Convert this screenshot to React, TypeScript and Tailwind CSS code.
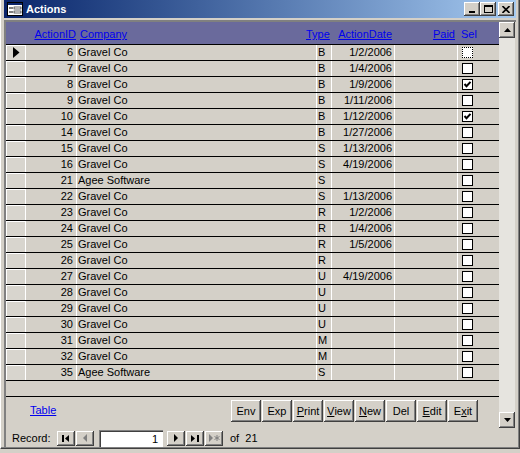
import React from 'react';

type Row = { id: number; company: string; type: string; date: string; sel: boolean };

const rows: Row[] = [
  { id: 6, company: 'Gravel Co', type: 'B', date: '1/2/2006', sel: false },
  { id: 7, company: 'Gravel Co', type: 'B', date: '1/4/2006', sel: false },
  { id: 8, company: 'Gravel Co', type: 'B', date: '1/9/2006', sel: true },
  { id: 9, company: 'Gravel Co', type: 'B', date: '1/11/2006', sel: false },
  { id: 10, company: 'Gravel Co', type: 'B', date: '1/12/2006', sel: true },
  { id: 14, company: 'Gravel Co', type: 'B', date: '1/27/2006', sel: false },
  { id: 15, company: 'Gravel Co', type: 'S', date: '1/13/2006', sel: false },
  { id: 16, company: 'Gravel Co', type: 'S', date: '4/19/2006', sel: false },
  { id: 21, company: 'Agee Software', type: 'S', date: '', sel: false },
  { id: 22, company: 'Gravel Co', type: 'S', date: '1/13/2006', sel: false },
  { id: 23, company: 'Gravel Co', type: 'R', date: '1/2/2006', sel: false },
  { id: 24, company: 'Gravel Co', type: 'R', date: '1/4/2006', sel: false },
  { id: 25, company: 'Gravel Co', type: 'R', date: '1/5/2006', sel: false },
  { id: 26, company: 'Gravel Co', type: 'R', date: '', sel: false },
  { id: 27, company: 'Gravel Co', type: 'U', date: '4/19/2006', sel: false },
  { id: 28, company: 'Gravel Co', type: 'U', date: '', sel: false },
  { id: 29, company: 'Gravel Co', type: 'U', date: '', sel: false },
  { id: 30, company: 'Gravel Co', type: 'U', date: '', sel: false },
  { id: 31, company: 'Gravel Co', type: 'M', date: '', sel: false },
  { id: 32, company: 'Gravel Co', type: 'M', date: '', sel: false },
  { id: 35, company: 'Agee Software', type: 'S', date: '', sel: false },
];

const raised =
  'bg-[#d4d0c8] shadow-[inset_-1px_-1px_#404040,inset_1px_1px_#ffffff,inset_-2px_-2px_#808080,inset_2px_2px_#d4d0c8]';

// footer command buttons, u = index of underlined access key
const commands: { label: string; u: number }[] = [
  { label: 'Env', u: -1 },
  { label: 'Exp', u: -1 },
  { label: 'Print', u: 0 },
  { label: 'View', u: 0 },
  { label: 'New', u: 0 },
  { label: 'Del', u: -1 },
  { label: 'Edit', u: 0 },
  { label: 'Exit', u: 1 },
];

const Check = ({ on, focus }: { on: boolean; focus?: boolean }) => (
  <div
    className={`w-[11px] h-[11px] bg-white border border-black flex items-center justify-center ${
      focus ? 'border-dotted' : ''
    }`}
  >
    {on && (
      <svg width="9" height="9" viewBox="0 0 9 9">
        <polyline points="1.5,4 3.5,6.2 7.5,1.8" fill="none" stroke="black" strokeWidth="2" />
      </svg>
    )}
  </div>
);

const NavBtn = ({ children }: { children: React.ReactNode }) => (
  <div className={`w-[18px] h-[15px] flex items-center justify-center ${raised}`}>{children}</div>
);

const TitleBtn = ({ children }: { children: React.ReactNode }) => (
  <div className={`w-[16px] h-[14px] flex items-center justify-center ${raised}`}>{children}</div>
);

export default function App() {
  return (
    <div className="w-[520px] h-[453px] bg-[#d4d0c8] font-['Liberation_Sans',Arial,sans-serif] text-[11px] text-black overflow-hidden">
      <div className="h-[449px] flex flex-col px-[3px] border-l border-r border-b border-l-[#ffffff] border-r-[#404040] border-b-[#404040] shadow-[inset_-1px_-1px_#808080]">
        {/* title bar */}
        <div className="h-[18px] flex items-center bg-gradient-to-r from-[#0a246a] to-[#a6caf0] pl-[3px] pr-[2px]">
          <svg width="16" height="14" viewBox="0 0 16 14" className="shrink-0">
            <rect x="0.5" y="0.5" width="15" height="13" fill="#ffffff" stroke="#000000" />
            <rect x="1" y="1" width="14" height="2" fill="#0a246a" />
            <rect x="2" y="5" width="4" height="2" fill="#808080" />
            <rect x="7" y="5" width="7" height="2" fill="#ffffff" stroke="#000" strokeWidth="0.6" />
            <rect x="2" y="9" width="4" height="2" fill="#808080" />
            <rect x="7" y="9" width="7" height="2" fill="#ffffff" stroke="#000" strokeWidth="0.6" />
          </svg>
          <span className="ml-[3px] text-white font-bold text-[11px] leading-none">Actions</span>
          <div className="flex-1" />
          <TitleBtn>
            <div className="w-[6px] h-[2px] bg-black mt-[6px] mr-[1px]" />
          </TitleBtn>
          <TitleBtn>
            <div className="w-[9px] h-[8px] border border-black border-t-2" />
          </TitleBtn>
          <div className="w-[2px]" />
          <TitleBtn>
            <svg width="8" height="7" viewBox="0 0 8 7">
              <path d="M0.5 0 L7.5 7 M7.5 0 L0.5 7" stroke="black" strokeWidth="1.6" />
            </svg>
          </TitleBtn>
        </div>
        <div className="h-[2px]" />

        {/* client area */}
        <div className="flex-1 flex flex-col border-t-2 border-l-2 border-t-[#808080] border-l-[#808080]">
          <div className="h-[406px] flex">
            {/* form */}
            <div className="w-[493px] flex flex-col">
              {/* form header */}
              <div className="h-[23px] bg-[#6a6a9c] border-b border-black flex items-end pb-[3px] leading-[13px] text-[#0000ee]">
                <div className="w-[19px]" />
                <div className="w-[52px] text-right pr-[1px] underline">ActionID</div>
                <div className="w-[229px] pl-[3px] underline">Company</div>
                <div className="w-[25px] text-right pr-[2px] underline">Type</div>
                <div className="w-[63px] text-right pr-[2px] underline">ActionDate</div>
                <div className="w-[63px] text-right pr-[2px] underline">Paid</div>
                <div className="pl-[4px]">Sel</div>
              </div>

              {/* detail rows */}
              {rows.map((r, i) => (
                <div key={r.id} className="h-[16px] flex border-b border-black leading-[15px]">
                  <div className="w-[19px] shadow-[inset_1px_1px_#ffffff] bg-[#d8d5ce] flex items-center justify-center">
                    {i === 0 && (
                      <svg width="7" height="11" viewBox="0 0 7 11" className="ml-[2px]">
                        <path d="M0 0 L6.5 5.5 L0 11 Z" fill="black" />
                      </svg>
                    )}
                  </div>
                  <div className="w-[51px] border-l border-white text-right pr-[3px]">{r.id}</div>
                  <div className="w-[240px] border-l border-white pl-[1px]">{r.company}</div>
                  <div className="w-[15px] border-l border-white pl-[1px]">{r.type}</div>
                  <div className="w-[63px] border-l border-white text-right pr-[2px]">{r.date}</div>
                  <div className="w-[63px] border-l border-white" />
                  <div className="w-[21px] border-l border-white pl-[4px] flex items-center">
                    <Check on={r.sel} focus={i === 0} />
                  </div>
                  <div className="flex-1" />
                </div>
              ))}

              <div className="h-[15px]" />

              {/* form footer */}
              <div className="flex-1 border-t border-black flex pt-[3px] pl-[24px]">
                <div className="w-[201px] mt-[4px] leading-[13px] text-[#0000ee] underline">Table</div>
                <div className="flex gap-[1px]">
                  {commands.map((c) => (
                    <div key={c.label} className={`w-[30px] h-[22px] flex items-center justify-center ${raised}`}>
                      {c.label.split('').map((ch, k) => (
                        <span key={k} className={k === c.u ? 'underline' : ''}>
                          {ch}
                        </span>
                      ))}
                    </div>
                  ))}
                </div>
              </div>
            </div>

            {/* vertical scrollbar */}
            <div className="w-[16px] flex flex-col bg-[#e6e4df]">
              <div className={`h-[16px] flex items-center justify-center ${raised}`}>
                <svg width="7" height="4" viewBox="0 0 7 4">
                  <path d="M3.5 0 L7 4 L0 4 Z" fill="black" />
                </svg>
              </div>
              <div className="flex-1" />
              <div className={`h-[16px] flex items-center justify-center ${raised}`}>
                <svg width="7" height="4" viewBox="0 0 7 4">
                  <path d="M0 0 L7 0 L3.5 4 Z" fill="black" />
                </svg>
              </div>
            </div>
          </div>

          {/* record navigation */}
          <div className="flex-1 flex items-center pl-[6px]">
            <span className="w-[45px]">Record:</span>
            <NavBtn>
              <svg width="8" height="7" viewBox="0 0 8 7">
                <rect x="0" y="0" width="2" height="7" fill="black" />
                <path d="M7 0 L3 3.5 L7 7 Z" fill="black" />
              </svg>
            </NavBtn>
            <div className="w-[1px]" />
            <NavBtn>
              <svg width="5" height="8" viewBox="0 0 5 8">
                <path d="M4 0 L0 4 L4 8 Z" fill="#808080" />
              </svg>
            </NavBtn>
            <div className="w-[5px]" />
            <div className="w-[64px] h-[17px] bg-white border-t border-l border-[#808080] shadow-[inset_1px_1px_#404040] text-right pr-[5px] leading-[16px]">
              1
            </div>
            <div className="w-[4px]" />
            <NavBtn>
              <svg width="5" height="8" viewBox="0 0 5 8">
                <path d="M0 0 L4 4 L0 8 Z" fill="black" />
              </svg>
            </NavBtn>
            <div className="w-[1px]" />
            <NavBtn>
              <svg width="8" height="7" viewBox="0 0 8 7">
                <path d="M0 0 L4 3.5 L0 7 Z" fill="black" />
                <rect x="6" y="0" width="2" height="7" fill="black" />
              </svg>
            </NavBtn>
            <div className="w-[1px]" />
            <NavBtn>
              <svg width="11" height="8" viewBox="0 0 11 8">
                <path d="M0 0 L4 4 L0 8 Z" fill="#808080" />
                <path d="M8 1 L8 7 M5.5 2.5 L10.5 5.5 M10.5 2.5 L5.5 5.5" stroke="#808080" strokeWidth="1" />
              </svg>
            </NavBtn>
            <span className="ml-[7px]">of&nbsp; 21</span>
          </div>
        </div>
      </div>
    </div>
  );
}
